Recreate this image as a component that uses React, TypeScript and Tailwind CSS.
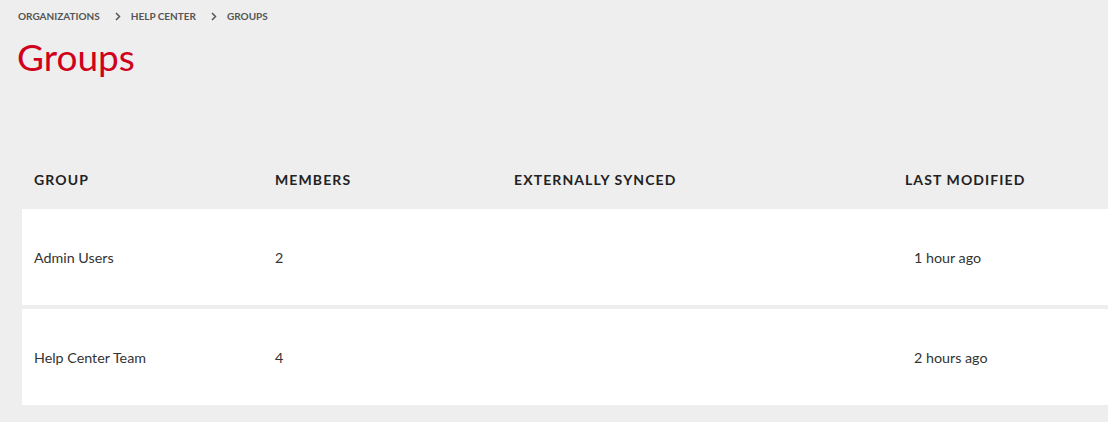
import React from "react";

const rows = [
  { name: "Admin Users", members: "2", synced: "", modified: "1 hour ago" },
  { name: "Help Center Team", members: "4", synced: "", modified: "2 hours ago" },
];

function Chevron() {
  return (
    <svg width="6" height="9" viewBox="0 0 6 9" className="ml-[15px] mr-[10px]">
      <path d="M1 1l3.5 3.5L1 8" fill="none" stroke="#555" strokeWidth="1.5" />
    </svg>
  );
}

export default function App() {
  return (
    <div
      className="w-[1108px] h-[422px] bg-[#eeeeee] overflow-hidden"
      style={{ fontFamily: "Lato, 'Noto Sans', sans-serif" }}
    >
      <div className="pl-[18px] pt-[9px] h-[14px] box-content flex items-center text-[10px] font-bold text-[#555] leading-none">
        <span>ORGANIZATIONS</span>
        <Chevron />
        <span>HELP CENTER</span>
        <Chevron />
        <span>GROUPS</span>
      </div>
      <h1 className="pl-[17px] mt-[12px] text-[37px] leading-[44px] text-[#d0021b] font-normal">
        Groups
      </h1>
      <div className="ml-[22px] mt-[72px]">
        <div className="grid grid-cols-[241px_239px_391px_1fr] h-[58px] pb-[2px] items-center text-[14px] font-bold tracking-[1.1px] text-[#222]">
          <div className="pl-[12px]">GROUP</div>
          <div className="pl-[12px]">MEMBERS</div>
          <div className="pl-[12px]">EXTERNALLY SYNCED</div>
          <div className="pl-[12px]">LAST MODIFIED</div>
        </div>
        <div className="flex flex-col gap-[4px]">
          {rows.map((r) => (
            <div
              key={r.name}
              className="grid grid-cols-[241px_239px_391px_1fr] h-[96px] items-center bg-white text-[14.3px] text-[#333]"
            >
              <div className="pl-[12px] pt-[2px]">{r.name}</div>
              <div className="pl-[12px] pt-[2px]">{r.members}</div>
              <div className="pl-[12px] pt-[2px]">{r.synced}</div>
              <div className="pl-[21px] pt-[2px]">{r.modified}</div>
            </div>
          ))}
        </div>
      </div>
    </div>
  );
}
